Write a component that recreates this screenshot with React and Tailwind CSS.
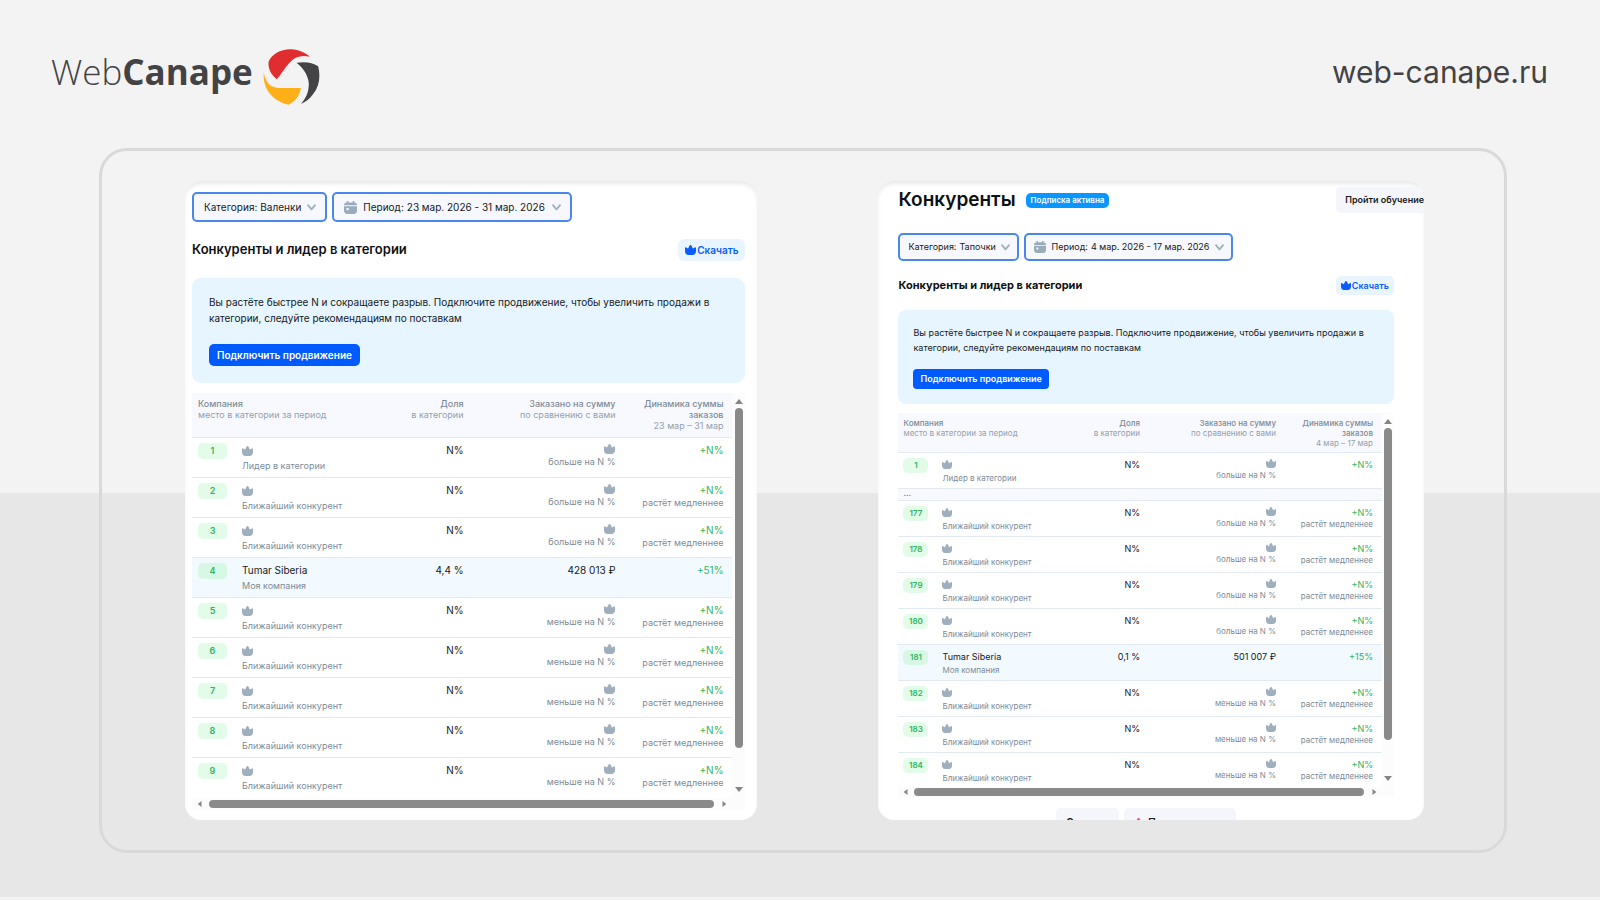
import React from "react";

const large = {
  card: "pl-[7px] pt-[11px] pb-[10px] pr-3",
  filters: "gap-[5px]",
  filter: "h-[30px] rounded-[5px] pl-[10px] pr-[9px] text-[10px] gap-[6px]",
  calendar: "w-[13px] h-[13px]",
  chevron: "w-[9px] h-[7px]",
  headRow: "mt-[17px] h-[22px]",
  heading: "text-[13px] font-semibold",
  download: "h-[22px] rounded-[6px] px-[7px] text-[10px]",
  downloadIcon: "w-[11px] h-[10px]",
  promo: "mt-[17px] rounded-[9px] pt-4 px-[17px] pb-[17px]",
  promoText: "text-[10px] leading-[16px]",
  promoButton: "mt-[18px] h-[22px] rounded-[5px] px-2 text-[10px]",
  tableWrap: "mt-[10px]",
  th: "h-[45px] pt-[5px] text-[9px] leading-[11px]",
  td: "pt-[5px]",
  rowHeight: "h-[40px] border-b border-[#e3e9f0]",
  lastHeight: "h-[40px]",
  firstPad: "pl-[6px]",
  endPad: "pr-[9px]",
  cols: ["w-[50px]", "", "w-[100px]", "w-[152px]", "w-[108px]"],
  badge: "w-[29px] h-[16px] rounded-[5px] text-[9px] leading-[16px]",
  name: "h-[15px] leading-[15px] text-[10px]",
  nameSub: "leading-[16px] text-[9px]",
  value: "leading-[14px] text-[10px]",
  crownLine: "h-[11px]",
  crown: "w-[11px] h-[10px]",
  sumSub: "leading-[16px] text-[9px]",
  trendSub: "leading-[12px] text-[9px]",
  rail: "w-[13px] pt-[5px] pb-[5px]",
  vThumb: "mt-[2px] mb-[37px]",
  bottomRail: "h-[12px] pl-[5px] pr-[18px]",
  hThumb: "ml-[6px] mr-[7px]",
};

const small = {
  card: "pl-[20px] pr-[30px] pt-[6px]",
  filters: "gap-[5px] mt-[20px]",
  filter: "h-[28px] rounded-[5px] pl-[8px] pr-[7px] text-[9px] gap-[5px]",
  calendar: "w-[12px] h-[12px]",
  chevron: "w-[9px] h-[7px]",
  headRow: "mt-[15px] h-[19px]",
  heading: "text-[11px] font-bold",
  download: "h-[19px] rounded-[5px] px-[5px] text-[9px]",
  downloadIcon: "w-[10px] h-[9px]",
  promo: "mt-[15px] rounded-[8px] pt-[15px] px-[15px] pb-[15px]",
  promoText: "text-[9px] leading-[15px]",
  promoButton: "mt-[14px] h-[20px] rounded-[4px] px-[7px] text-[9px]",
  tableWrap: "mt-[9px]",
  th: "h-[40px] pt-[5px] text-[8px] leading-[10px]",
  td: "pt-[5px]",
  rowHeight: "h-[36px] border-b border-[#e3e9f0]",
  lastHeight: "h-[34px]",
  firstPad: "pl-[5px]",
  endPad: "pr-[9px]",
  cols: ["w-[44px]", "", "w-[90px]", "w-[136px]", "w-[97px]"],
  badge: "w-[25px] h-[15px] rounded-[5px] text-[8px] leading-[15px]",
  name: "h-[13px] leading-[13px] text-[9px]",
  nameSub: "leading-[15px] text-[8px]",
  value: "leading-[13px] text-[9px]",
  crownLine: "h-[10px]",
  crown: "w-[10px] h-[9px]",
  sumSub: "leading-[15px] text-[8px]",
  trendSub: "leading-[11px] text-[8px]",
  rail: "w-[12px] pt-[5px] pb-[5px]",
  vThumb: "mt-[2px] mb-[34px]",
  bottomRail: "h-[10px] pl-[5px] pr-[17px]",
  hThumb: "ml-[5px] mr-[7px]",
};

const near = (place, sum) => ({ place, sub: "Ближайший конкурент", share: "N%", sumSub: sum, trend: "+N%", trendSub: "растёт медленнее" });
const more = "больше на N %";
const less = "меньше на N %";
const leader = { place: 1, sub: "Лидер в категории", share: "N%", sumSub: more, trend: "+N%" };

const bootsRows = [
  leader,
  near(2, more),
  near(3, more),
  { place: 4, mine: true, name: "Tumar Siberia", sub: "Моя компания", share: "4,4 %", sum: "428 013 ₽", trend: "+51%" },
  near(5, less),
  near(6, less),
  near(7, less),
  near(8, less),
  near(9, less),
];

const slippersRows = [
  leader,
  { gap: true, place: "gap" },
  near(177, more),
  near(178, more),
  near(179, more),
  near(180, more),
  { place: 181, mine: true, name: "Tumar Siberia", sub: "Моя компания", share: "0,1 %", sum: "501 007 ₽", trend: "+15%" },
  near(182, less),
  near(183, less),
  near(184, less),
];

function Crown({ className }) {
  return (
    <svg viewBox="0 0 12 10" preserveAspectRatio="none" className={className} fill="currentColor" aria-hidden="true">
      <path d="M6 0C6.600 0 7 .4 7.300 1L8.600 3.600L10.700 2.500C11.400 2.100 12 2.400 12 3.200V6C12 8.500 10.400 10 8.200 10H3.800C1.600 10 0 8.500 0 6V3.200C0 2.400.6 2.100 1.300 2.500L3.400 3.600L4.700 1C5 .4 5.400 0 6 0Z" />
    </svg>
  );
}

function Calendar({ className }) {
  return (
    <svg viewBox="0 0 13 13" className={className} fill="none" aria-hidden="true">
      <path d="M3.500 0v2M9.500 0v2" stroke="#9aabba" strokeWidth="1.600" />
      <path d="M0 4.200C0 2.500 1 1.400 2.800 1.400h7.400C12 1.400 13 2.500 13 4.200Z" fill="#9aabba" />
      <path d="M0 5.200h13v4.300c0 2.200-1.200 3.500-3.400 3.500H3.400C1.200 13 0 11.700 0 9.500Z" fill="#9aabba" />
      <rect x="2.500" y="7" width="2.200" height="2.200" rx=".6" fill="#f6f8fd" />
    </svg>
  );
}

function Chevron({ className }) {
  return (
    <svg viewBox="0 0 9 7" className={className} fill="none" aria-hidden="true">
      <path d="M1 1.200l3.500 4.200L8 1.200" stroke="#9fb0be" strokeWidth="1.800" strokeLinecap="round" strokeLinejoin="round" />
    </svg>
  );
}

function Arrow({ points, className }) {
  return (
    <svg viewBox="0 0 8 8" className={className} fill="#858585" aria-hidden="true">
      <polygon points={points} />
    </svg>
  );
}

function Filter({ s, id, label, value, icon }) {
  return (
    <div className={`flex items-center border-2 border-[#4a86ee] bg-[#f6f8fd] text-[#16191d] ${s.filter}`}>
      {icon && <Calendar className={`shrink-0 ${s.calendar}`} />}
      <div className="flex items-center gap-[3px] whitespace-nowrap">
        <label htmlFor={id}>{label}</label>
        <select id={id} className="appearance-none bg-transparent p-0">
          <option>{value}</option>
        </select>
      </div>
      <Chevron className={`shrink-0 ${s.chevron}`} />
    </div>
  );
}

function Row({ s, row, last }) {
  if (row.gap) {
    return (
      <tr className="bg-[#f8f9fe]">
        <td colSpan={5} className={`h-[12px] border-b border-[#e3e9f0] pb-[3px] text-[8px] font-semibold leading-[8px] text-[#7d8b99] ${s.firstPad}`}>...</td>
      </tr>
    );
  }
  const cell = `align-top ${s.td} ${last ? s.lastHeight : s.rowHeight}`;
  return (
    <tr className={row.mine ? "bg-[#f3faff]" : "bg-white"}>
      <td className={`${cell} ${s.firstPad}`}>
        <div className={`text-center font-semibold text-[#2fb55f] ${row.mine ? "bg-[#d8f8e6]" : "bg-[#e2fce9]"} ${s.badge}`}>{row.place}</div>
      </td>
      <td className={cell}>
        <div className={`flex items-center text-[#16191d] ${s.name}`}>
          {row.name || <Crown className={`text-[#a0afbd] ${s.crown}`} />}
        </div>
        <div className={`text-[#7d8b99] ${s.nameSub}`}>{row.sub}</div>
      </td>
      <td className={`${cell} text-right text-[#16191d] ${s.endPad}`}>
        <div className={s.value}>{row.share}</div>
      </td>
      <td className={`${cell} text-right ${s.endPad}`}>
        {row.sum ? (
          <div className={`text-[#16191d] ${s.value}`}>{row.sum}</div>
        ) : (
          <>
            <div className={`flex items-center justify-end ${s.crownLine}`}>
              <Crown className={`text-[#a0afbd] ${s.crown}`} />
            </div>
            <div className={`text-[#7d8b99] ${s.sumSub}`}>{row.sumSub}</div>
          </>
        )}
      </td>
      <td className={`${cell} whitespace-nowrap text-right ${s.endPad}`}>
        <div className={`text-[#2fb55f] ${s.value}`}>{row.trend}</div>
        {row.trendSub && <div className={`text-[#7d8b99] ${s.trendSub}`}>{row.trendSub}</div>}
      </td>
    </tr>
  );
}

function Report({ s, id, category, period, range, rows, top, bottom }) {
  const th = `border-b border-[#e3e9f0] align-top font-normal text-[#93a0ad] ${s.th}`;
  const strong = "font-medium text-[#7d8b99]";
  return (
    <section className={`min-w-0 overflow-hidden rounded-[16px] bg-white shadow-[inset_0_4px_4px_-1px_#e9e9e9] ${s.card}`}>
      {top}
      <div className={`flex ${s.filters}`}>
        <Filter s={s} id={`${id}-category`} label="Категория:" value={category} />
        <Filter s={s} id={`${id}-period`} label="Период:" value={period} icon />
      </div>
      <div className={`flex items-center justify-between ${s.headRow}`}>
        <h2 className={`text-[#0e1114] ${s.heading}`}>Конкуренты и лидер в категории</h2>
        <button className={`flex items-center gap-[1px] bg-[#e8f5ff] font-semibold text-[#0a5cff] ${s.download}`}>
          <Crown className={s.downloadIcon} />
          Скачать
        </button>
      </div>
      <div className={`bg-[#e6f5ff] ${s.promo}`}>
        <p className={`text-[#16191d] ${s.promoText}`}>
          Вы растёте быстрее N и сокращаете разрыв. Подключите продвижение, чтобы увеличить продажи в категории, следуйте рекомендациям по поставкам
        </p>
        <button className={`block bg-[#005bff] font-semibold text-white ${s.promoButton}`}>Подключить продвижение</button>
      </div>
      <div className={s.tableWrap}>
        <div className="flex">
          <table className="min-w-0 flex-1 table-fixed border-separate border-spacing-0">
            <colgroup>
              {s.cols.map((c, i) => (
                <col key={i} className={c} />
              ))}
            </colgroup>
            <thead>
              <tr className="bg-[#f8f9fe]">
                <th colSpan={2} className={`${th} text-left ${s.firstPad}`}>
                  <div className={strong}>Компания</div>
                  место в категории за период
                </th>
                <th className={`${th} text-right ${s.endPad}`}>
                  <div className={strong}>Доля</div>
                  в категории
                </th>
                <th className={`${th} text-right ${s.endPad}`}>
                  <div className={strong}>Заказано на сумму</div>
                  по сравнению с вами
                </th>
                <th className={`${th} text-right ${s.endPad}`}>
                  <div className={strong}>Динамика суммы заказов</div>
                  {range}
                </th>
              </tr>
            </thead>
            <tbody>
              {rows.map((r, i) => (
                <Row key={r.place} s={s} row={r} last={i === rows.length - 1} />
              ))}
            </tbody>
          </table>
          <div className={`flex flex-col items-center bg-[#fcfcfc] ${s.rail}`} aria-hidden="true">
            <Arrow points="0,6 4,1 8,6" className="h-[8px] w-[8px]" />
            <div className={`w-[8px] flex-1 rounded-full bg-[#8a8a8a] ${s.vThumb}`} />
            <Arrow points="0,2 4,7 8,2" className="h-[8px] w-[8px]" />
          </div>
        </div>
        <div className={`flex items-center bg-[#fcfcfc] ${s.bottomRail}`} aria-hidden="true">
          <Arrow points="6,0 1,4 6,8" className="h-[8px] w-[6px]" />
          <div className={`h-[8px] flex-1 rounded-full bg-[#8a8a8a] ${s.hThumb}`} />
          <Arrow points="2,0 7,4 2,8" className="h-[8px] w-[6px]" />
        </div>
      </div>
      {bottom}
    </section>
  );
}

function Logo() {
  return (
    <a href="#" className="flex items-start gap-[10px] text-[#434345]" aria-label="WebCanape">
      <span className="font-['Open_Sans'] text-[35px] leading-[46px]">
        <span className="font-light">Web</span>
        <span className="font-bold">Canape</span>
      </span>
      <svg viewBox="22 22 170 168" className="h-[56px] w-[57px]" aria-hidden="true">
        <path fill="#e02d30" d="M38 61C47 38 75 22 106 23C130 24 150 34 162 45C136 39 117 46 103 61C88 78 76 97 63 113C46 98 37 84 38 61Z" />
        <path fill="#434345" d="M122 63C146 60 170 61 187 74C195 105 190 134 172 157C161 172 149 181 135 187C151 171 162 146 158 118C154 96 142 79 122 63Z" />
        <path fill="#ffb018" d="M24 91C27 118 42 138 68 139L135 139C132 159 121 179 98 189C62 182 34 157 26 124C23 111 23 101 24 91Z" />
      </svg>
    </a>
  );
}

export default function App() {
  return (
    <div className="min-h-screen bg-[linear-gradient(#f3f3f3_493px,#e7e7e7_493px,#e7e7e7_897px,#f3f3f3_897px)] pb-[46px] font-['Inter','Noto_Sans',sans-serif]">
      <header className="flex h-[148px] items-start justify-between pl-[51px] pr-[52px] pt-[49px]">
        <Logo />
        <a href="#" className="text-[30px] leading-[46px] text-[#434345]">web-canape.ru</a>
      </header>
      <main className="ml-[99px] mr-[93px] grid grid-cols-[573fr_546fr] gap-x-[121px] rounded-[28px] border-[3px] border-[#d9d9d9] pb-[30px] pl-[83px] pr-[80px] pt-[30px]">
        <Report s={large} id="boots" category="Валенки" period="23 мар. 2026 - 31 мар. 2026" range="23 мар – 31 мар" rows={bootsRows} />
        <Report
          s={small}
          id="slippers"
          category="Тапочки"
          period="4 мар. 2026 - 17 мар. 2026"
          range="4 мар – 17 мар"
          rows={slippersRows}
          top={
            <div className="-mr-[30px] flex h-[26px] items-center">
              <h1 className="text-[19px] font-semibold text-[#0e1114]">Конкуренты</h1>
              <span className="ml-[10px] h-[15px] rounded-[5px] bg-[#0a96ff] px-[5px] text-[8px] font-semibold leading-[15px] text-white">Подписка активна</span>
              <button className="ml-auto h-[26px] whitespace-nowrap rounded-l-[5px] bg-[#f5f6fb] pl-[9px] text-[9px] font-semibold text-[#16191d]">Пройти обучение</button>
            </div>
          }
          bottom={
            <div className="mt-[11px] flex h-[12px] justify-center gap-[5px] overflow-hidden text-[10px] font-semibold text-[#16191d]">
              <button className="flex h-[28px] w-[63px] shrink-0 items-center rounded-[5px] bg-[#f5f6fb] pl-[10px]">С</button>
              <button className="flex h-[28px] w-[112px] shrink-0 items-center gap-[4px] rounded-[5px] bg-[#f5f6fb] pl-[9px]">
                <Crown className="h-[9px] w-[11px] text-[#f0418c]" />
                П
              </button>
            </div>
          }
        />
      </main>
    </div>
  );
}
